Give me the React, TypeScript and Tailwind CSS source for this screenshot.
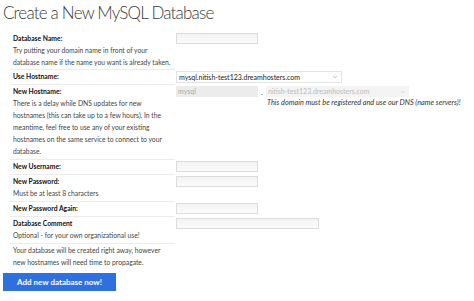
import { ChevronDown } from "lucide-react";

type Row = {
  label: string;
  notes?: string[];
  field?: React.ReactNode;
  pad: string;
};

const textInput = (w: string) => (
  <input
    type="text"
    className={`block h-[11px] ${w} border border-[#dcdcdc] bg-gradient-to-b from-[#f3f3f3] to-[#fbfbfb] px-[2px] outline-none`}
  />
);

export default function App() {
  const rows: Row[] = [
    {
      label: "Database Name:",
      notes: [
        "Try putting your domain name in front of your",
        "database name if the name you want is already taken.",
      ],
      field: textInput("w-[82px]"),
      pad: "pb-[1px]",
    },
    {
      label: "Use Hostname:",
      field: (
        <div className="flex h-[12px] w-[166px] items-center justify-between border border-[#e2e2e2] bg-white pl-[2px] pr-[3px] text-[7px] text-[#222]">
          <span>mysql.nitish-test123.dreamhosters.com</span>
          <ChevronDown className="h-[6px] w-[6px] text-[#777]" strokeWidth={2} />
        </div>
      ),
      pad: "pb-[2px]",
    },
    {
      label: "New Hostname:",
      notes: [
        "There is a delay while DNS updates for new",
        "hostnames (this can take up to a few hours). In the",
        "meantime, feel free to use any of your existing",
        "hostnames on the same service to connect to your",
        "database.",
      ],
      field: (
        <div className="flex flex-col">
          <div className="flex items-center">
            <div className="flex h-[11px] w-[82px] items-center bg-[#ececec] pl-[2px] text-[7px] text-[#aaa]">
              mysql
            </div>
            <span className="mx-[3px] text-[8px] leading-none text-[#333]">.</span>
            <div className="flex h-[11px] w-[143px] items-center justify-between bg-[#f4f4f4] pl-[2px] pr-[3px] text-[7px] text-[#bbb]">
              <span>nitish-test123.dreamhosters.com</span>
              <ChevronDown className="h-[6px] w-[6px] text-[#bbb]" strokeWidth={2} />
            </div>
          </div>
          <p className="ml-[91px] mt-[1px] whitespace-nowrap text-[7.3px] font-normal italic leading-[10px] text-[#333]">
            This domain must be registered and use our DNS (name servers)!
          </p>
        </div>
      ),
      pad: "pb-[2px]",
    },
    { label: "New Username:", field: textInput("w-[82px]"), pad: "pb-[2px]" },
    {
      label: "New Password:",
      notes: ["Must be at least 8 characters"],
      field: textInput("w-[82px]"),
      pad: "pb-[2px]",
    },
    { label: "New Password Again:", field: textInput("w-[82px]"), pad: "pb-[2px]" },
    {
      label: "Database Comment",
      notes: ["Optional - for your own organizational use!"],
      field: textInput("w-[143px]"),
      pad: "pb-[2px]",
    },
  ];

  return (
    <div className="h-[301px] w-[474px] overflow-hidden bg-white font-['Lato',sans-serif] text-[#333]">
      <h1 className="pl-[3px] pt-[1px] text-[17px] font-light leading-[24px] tracking-[-0.8px] text-[#3a3a3a]">
        Create a New MySQL Database
      </h1>

      <div className="ml-[10px] mt-[7px] flex flex-col">
        {rows.map((row) => (
          <div key={row.label} className="flex">
            <div
              className={`w-[165px] shrink-0 whitespace-nowrap border-b border-[#ececec] pl-[3px] text-[6.75px] leading-[12px] ${row.pad}`}
            >
              <div className="font-bold text-[#111]">{row.label}</div>
              {row.notes?.map((n) => (
                <div key={n} className="text-[#444]">
                  {n}
                </div>
              ))}
            </div>
            <div className="pl-[1px] pt-[1px]">{row.field}</div>
          </div>
        ))}
        <div className="w-[165px] whitespace-nowrap pl-[3px] text-[6.75px] leading-[12px] text-[#444]">
          <div>Your database will be created right away, however</div>
          <div>new hostnames will need time to propagate.</div>
        </div>
      </div>

      <button className="ml-[3px] mt-[5px] block h-[18px] w-[113px] bg-[#2f70e0] text-[8px] font-bold text-white">
        Add new database now!
      </button>
    </div>
  );
}
